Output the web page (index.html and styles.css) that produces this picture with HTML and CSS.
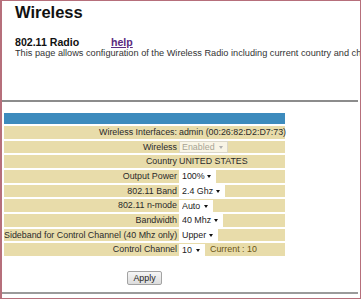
FILE: index.html
```html
<!DOCTYPE html>
<html lang="en">
<head>
  <meta charset="UTF-8" />
  <title>Wireless</title>
  <link rel="stylesheet" href="styles.css">
</head>
<body>
  <div class="page">
    <div class="top">
      <h1>Wireless</h1>
      <div class="sub"><span class="sub-title">802.11 Radio</span><a href="#" class="help">help</a></div>
      <p class="intro">This page allows configuration of the Wireless Radio including current country and channel settings.</p>
    </div>
    <hr class="rule">
    <div class="form">
      <table class="radio">
        <colgroup><col class="c-lbl"><col class="c-val"></colgroup>
        <tr class="head"><td colspan="2"></td></tr>
        <tr><td class="lbl">Wireless Interfaces:</td><td class="val">admin (00:26:82:D2:D7:73)</td></tr>
        <tr>
          <td class="lbl">Wireless</td>
          <td class="val"><span class="sel off w-enabled"><select disabled><option>Enabled</option></select></span></td>
        </tr>
        <tr><td class="lbl">Country</td><td class="val">UNITED STATES</td></tr>
        <tr>
          <td class="lbl">Output Power</td>
          <td class="val"><span class="sel w-power"><select><option>100%</option><option>75%</option><option>50%</option></select></span></td>
        </tr>
        <tr>
          <td class="lbl">802.11 Band</td>
          <td class="val"><span class="sel w-band"><select><option>2.4 Ghz</option><option>5 Ghz</option></select></span></td>
        </tr>
        <tr>
          <td class="lbl">802.11 n-mode</td>
          <td class="val"><span class="sel w-mode"><select><option>Auto</option><option>Off</option></select></span></td>
        </tr>
        <tr>
          <td class="lbl">Bandwidth</td>
          <td class="val"><span class="sel w-bw"><select><option>40 Mhz</option><option>20 Mhz</option></select></span></td>
        </tr>
        <tr>
          <td class="lbl">Sideband for Control Channel (40 Mhz only)</td>
          <td class="val"><span class="sel w-side"><select><option>Upper</option><option>Lower</option></select></span></td>
        </tr>
        <tr>
          <td class="lbl">Control Channel</td>
          <td class="val"><span class="sel w-chan"><select><option>10</option><option>1</option><option>6</option><option>11</option></select></span><span class="current">Current : 10</span></td>
        </tr>
      </table>
      <div class="actions"><button type="button" class="apply">Apply</button></div>
    </div>
    <hr class="rule bottom">
  </div>
</body>
</html>
```

FILE: styles.css
```css
html, body {
  margin: 0;
  padding: 0;
  overflow: hidden;
  background: #fff;
}
body {
  font-family: "Liberation Sans", Arial, sans-serif;
  color: #222;
}
.page {
  box-sizing: border-box;
  width: 361px;
  height: 299px;
  border: 1px solid #b66f7b;
  border-left-width: 2px;
  overflow: hidden;
}
.top {
  padding-left: 13px;
  white-space: nowrap;
}
h1 {
  margin: 2px 0 0;
  font-size: 16.5px;
  line-height: 19px;
  color: #111;
}
.sub {
  margin-top: 14.3px;
  font-size: 10.6px;
  line-height: 12px;
  font-weight: bold;
  color: #111;
}
.sub-title {
  display: inline-block;
  width: 96px;
}
.help {
  color: #5b2b80;
}
.intro {
  margin: 0;
  font-size: 9.2px;
  line-height: 11px;
  color: #333;
}
.rule {
  height: 2px;
  margin: 40.7px 2px 0 0;
  border: none;
  background: #8c8c8c;
}
.rule.bottom {
  margin-top: 6.6px;
  background: #9a9a9a;
}
.form {
  width: 281px;
  margin: 9px 0 0 2px;
  text-align: center;
}
.radio {
  width: 281px;
  border-collapse: separate;
  border-spacing: 0 2px;
  font-size: 8.9px;
  color: #2a2a2a;
  table-layout: fixed;
}
.c-lbl { width: 174px; }
.c-val { width: 107px; }
.radio td {
  padding: 0;
  height: 12.7px;
  line-height: 11px;
  background: #e8dcaa;
  white-space: nowrap;
}
.radio .head td {
  height: 11px;
  background: #3d8bbd;
}
.lbl {
  padding-right: 1px !important;
  text-align: right;
}
.val {
  text-align: left;
  padding-left: 1px !important;
}
.sel {
  position: relative;
  display: inline-block;
  vertical-align: middle;
}
.sel select {
  appearance: none;
  -webkit-appearance: none;
  display: block;
  box-sizing: border-box;
  width: 100%;
  height: 12.5px;
  margin: 0;
  padding: 0 0 0 3px;
  border: none;
  border-radius: 0;
  background: #fff;
  font-family: inherit;
  font-size: 8.9px;
  color: #222;
  outline: none;
}
.sel::after {
  content: "";
  position: absolute;
  right: 5px;
  top: 5px;
  border-left: 2.5px solid transparent;
  border-right: 2.5px solid transparent;
  border-top: 3px solid #111;
}
.sel.off select {
  border: 1px solid #d6d6d6;
  color: #8c8c8c;
  height: 11.5px;
  padding-left: 2px;
}
.sel.off::after {
  border-top-color: #b0b0b0;
  top: 4.5px;
}
.w-enabled { width: 49px; }
.w-power { width: 37px; }
.w-band { width: 46px; }
.w-mode { width: 34px; }
.w-bw { width: 44px; }
.w-side { width: 39px; }
.w-chan { width: 26px; }
.current {
  margin-left: 5px;
  color: #6a5514;
  vertical-align: middle;
}
.actions {
  margin-top: 13px;
  line-height: 0;
}
.apply {
  box-sizing: border-box;
  width: 35px;
  height: 14px;
  padding: 0;
  border: 1px solid #a3a3a3;
  border-radius: 2px;
  background: linear-gradient(#f6f6f6, #dcdcdc);
  font-family: inherit;
  font-size: 8.9px;
  line-height: 12px;
  color: #222;
}
```
